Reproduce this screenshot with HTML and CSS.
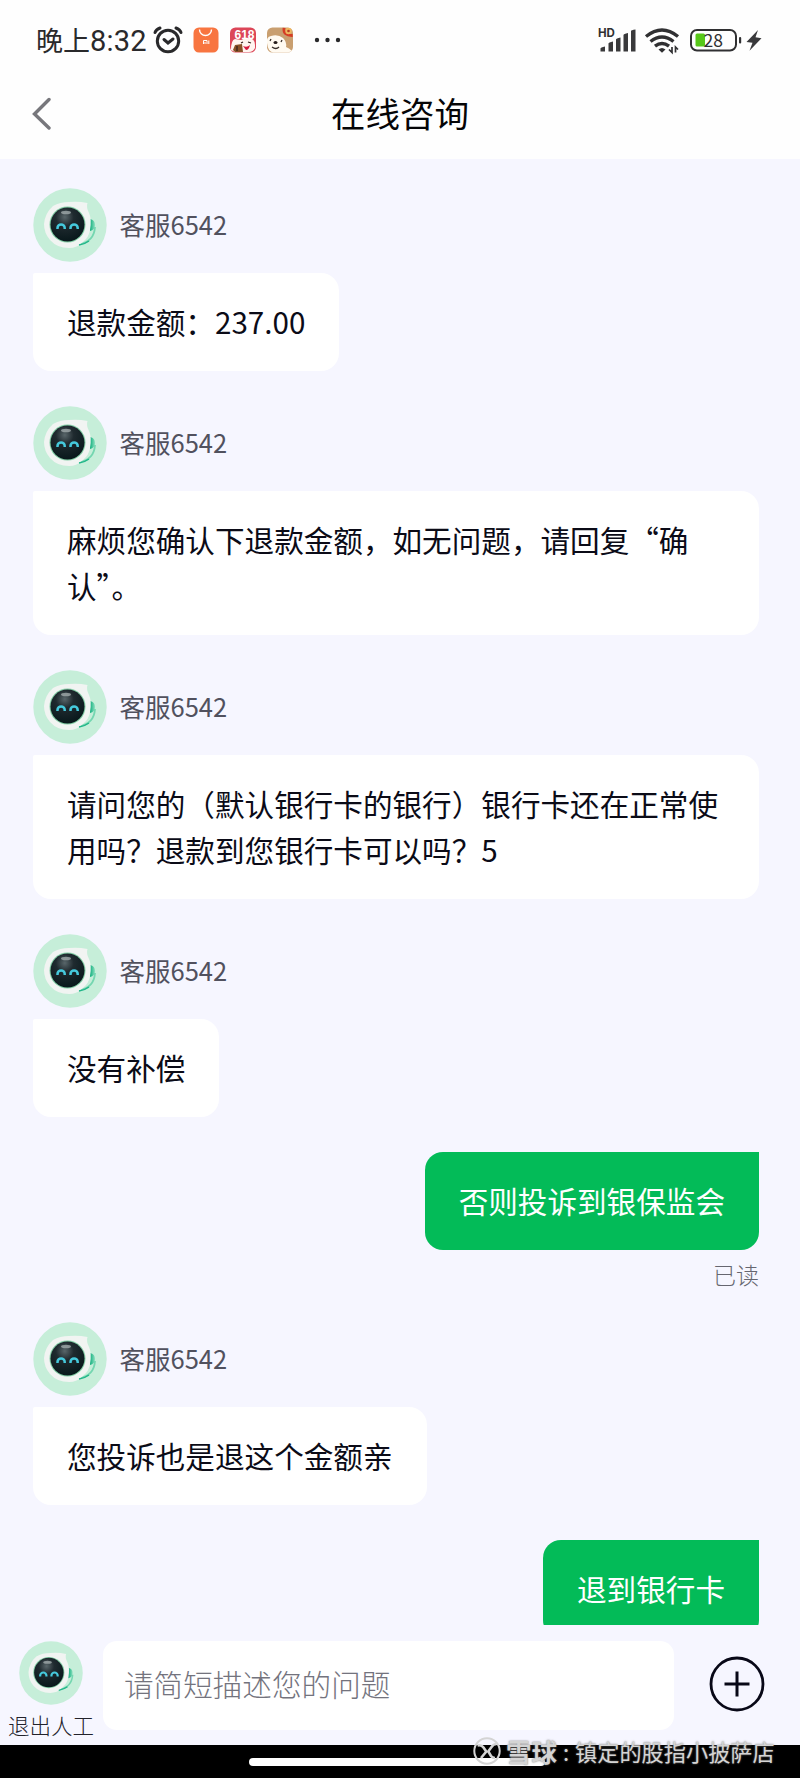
FILE: index.html
```html
<!DOCTYPE html>
<html lang="zh-CN">
<head>
<meta charset="utf-8">
<title>在线咨询</title>
<link rel="stylesheet" href="styles.css">
</head>
<body>
<svg class="defs" aria-hidden="true">
  <defs>
    <radialGradient id="face" cx="42%" cy="28%" r="75%">
      <stop offset="0" stop-color="#59666a"/><stop offset=".35" stop-color="#1f2a2f"/><stop offset="1" stop-color="#07171a"/>
    </radialGradient>
    <linearGradient id="ear" x1="0" y1="0" x2="1" y2="0">
      <stop offset="0" stop-color="#0fae7c"/><stop offset="1" stop-color="#8ce0bf"/>
    </linearGradient>
    <symbol id="robot" viewBox="0 0 74 74">
      <circle cx="37" cy="37" r="36.7" fill="#c6eed9"/>
      <path d="M57 31q5 1 5 6t-5 6z" fill="url(#ear)"/>
      <path d="M62 39q-1 15-16 17" fill="none" stroke="#74d6b0" stroke-width="1.8"/>
      <path d="M36 14Q45 13 54.500 15Q53 19 56 25Q59 31 57 42Q56 49 50 54Q44 60 36 60Q24 60 17 52Q11 45 11 36Q12 25 20 18Q27 14 36 14Z" fill="#f1f4f2"/>
      <circle cx="34.500" cy="36.500" r="18" fill="#82cda5"/>
      <circle cx="34.500" cy="36.500" r="17" fill="url(#face)"/>
      <ellipse cx="33" cy="24.500" rx="5" ry="1.800" fill="#b9c1c2" opacity=".65"/>
      <path d="M24.500 41v-1a3.600 3.600 0 0 1 7.200 0v1M37.500 41v-1a3.600 3.600 0 0 1 7.200 0v1" fill="none" stroke="#45c9dc" stroke-width="2.500"/>
      <path d="M46 57q6-1 10-4" fill="none" stroke="#22b689" stroke-width="1.500"/>
    </symbol>
  </defs>
</svg>
<div class="screen">
  <header class="top">
    <div class="status">
      <span class="clock">晚上<span class="digits">8:32</span></span>
      <svg class="status-left" width="190" height="34" viewBox="152 23 190 34">
        <g fill="none" stroke="#29292b" stroke-width="3" stroke-linecap="round">
          <circle cx="168" cy="41" r="10.700"/>
          <path d="M164 39.500l4 3.500 5-4M155 32.500q1-3 5-4.500M176 28q4 1.500 5 4.500"/>
        </g>
        <rect x="193.500" y="27.500" width="25" height="25" rx="5.500" fill="#f87540"/>
        <path d="M199.500 29.500a6 6 0 0 0 12 0" fill="none" stroke="#fff" stroke-width="1.400"/>
        <path d="M203.500 44v-3.500h3.500V44M205 42v2M208.800 40.500V44" fill="none" stroke="#fff" stroke-width="1"/>
        <rect x="230" y="27.500" width="26" height="25" rx="5.500" fill="#dc4658"/>
        <path d="M231 50q0-10 4-11l6 1 5-2q9-1 9 7v3q-2 4-6 4h-14z" fill="#fff5f0"/>
        <text x="234.500" y="38.500" class="promo">618</text>
        <path d="M233 50l2-5 7-1 1 8h-8z" fill="#885127"/>
        <path d="M243 46q4 2 7-1-1 5-4 5z" fill="#d51b3d"/>
        <path d="M241 43l2-1M248 42l3 1M237 46v5" stroke="#36221c" stroke-width="1.300"/>
        <rect x="267" y="27.500" width="26" height="25" rx="5.500" fill="#c99f70"/>
        <path d="M267 43q-1-6 4-7 7-2 12 2 4 4 3 9 3 1 6 4l-4 1.500h-15q-5-1-6-9.500z" fill="#fffaf1"/>
        <path d="M284 27.800q-1 8 8.700 7.700" fill="none" stroke="#d53c24" stroke-width="2.800"/>
        <circle cx="288.500" cy="31" r="3.200" fill="#efb65e"/><circle cx="288.500" cy="31" r="1.300" fill="#b93c22"/>
        <path d="M270 41l1-2M281 42l1-2M272 47q4 3 7 0" fill="none" stroke="#382e29" stroke-width="1.300"/>
        <ellipse cx="275.500" cy="42.500" rx="2" ry="1.500" fill="#241b19"/>
        <g fill="#29292b"><circle cx="317" cy="40" r="2.200"/><circle cx="327.500" cy="40" r="2.200"/><circle cx="338" cy="40" r="2.200"/></g>
      </svg>
      <svg class="status-right" width="166" height="34" viewBox="597 23 166 34">
        <text x="598" y="37" class="hd">HD</text>
        <path d="M600.500 51.500V48.500q0-1 4.500-2v5zM608.500 51.500V43.500q0-1 4.500-2v10zM616 51.500V39.500q0-1 4.500-2v14zM623.500 51.500V35q0-1 4.500-2v18.500zM631 51.500V31q0-1 4.500-1.500v22z" fill="#39393b"/>
        <g fill="none" stroke="#303032" stroke-width="3.400">
          <path d="M646 36.500q16-13 32 0M650.500 41.500q11.500-9 23 0M655 46.200q7-5.500 14 0"/>
        </g>
        <path d="M658.500 49.500q3.500-3 7 0l-3.500 3.300z" fill="#303032"/>
        <path d="M672 47v5.500l-3-3M675.500 52.500V47l2.500 2.500" fill="none" stroke="#303032" stroke-width="1.700"/>
        <rect x="691" y="30" width="45" height="20.500" rx="6" fill="none" stroke="#303032" stroke-width="2"/>
        <rect x="695.500" y="33.500" width="9.500" height="13" rx="1.500" fill="#57c719"/>
        <text x="703.500" y="46.500" class="charge">28</text>
        <rect x="739" y="37" width="2.200" height="6.500" rx="1" fill="#303032"/>
        <path d="M758 30l-11.500 12 6 .8-3 8 12-12.500-6-1z" fill="#39393b"/>
      </svg>
    </div>
    <div class="nav">
      <svg class="back" width="19" height="34" viewBox="0 0 19 34"><path d="M17 2.500L2.500 17 17 31" fill="none" stroke="#77777c" stroke-width="3.400" stroke-linecap="round"/></svg>
      <h1 class="title">在线咨询</h1>
    </div>
  </header>

  <main class="chat">
    <section class="msg">
      <div class="who"><svg class="avatar"><use href="#robot"/></svg><span>客服6542</span></div>
      <p class="bubble">退款金额：237.00</p>
    </section>
    <section class="msg">
      <div class="who"><svg class="avatar"><use href="#robot"/></svg><span>客服6542</span></div>
      <p class="bubble wide">麻烦您确认下退款金额，如无问题，请回复“确<br>认”。</p>
    </section>
    <section class="msg">
      <div class="who"><svg class="avatar"><use href="#robot"/></svg><span>客服6542</span></div>
      <p class="bubble wide">请问您的（默认银行卡的银行）银行卡还在正常使<br>用吗？退款到您银行卡可以吗？5</p>
    </section>
    <section class="msg">
      <div class="who"><svg class="avatar"><use href="#robot"/></svg><span>客服6542</span></div>
      <p class="bubble">没有补偿</p>
    </section>
    <section class="msg mine">
      <p class="bubble">否则投诉到银保监会</p>
      <span class="read">已读</span>
    </section>
    <section class="msg">
      <div class="who"><svg class="avatar"><use href="#robot"/></svg><span>客服6542</span></div>
      <p class="bubble">您投诉也是退这个金额亲</p>
    </section>
    <section class="msg mine">
      <p class="bubble">退到银行卡</p>
    </section>
  </main>

  <footer class="composer">
    <div class="exit"><svg class="avatar small"><use href="#robot"/></svg><span>退出人工</span></div>
    <div class="field">请简短描述您的问题</div>
    <svg class="plus" width="56" height="56" viewBox="0 0 56 56"><circle cx="28" cy="28" r="26" fill="none" stroke="#080817" stroke-width="2.800"/><path d="M15.500 28h25M28 15.500v25" stroke="#080817" stroke-width="3"/></svg>
  </footer>
  <div class="gesture"><span class="pill"></span></div>
  <div class="credit">
    <svg width="30" height="30" viewBox="0 0 30 30"><g fill="none" stroke="#d4d4d4"><circle cx="15" cy="15" r="12.700" stroke-width="2"/><path d="M5.500 9.500q4-1 6 2l2 3q1 1 0 2l-4.500 5.500M24.500 8q-3 0-5 3l-2.500 3.500q-1 1 0 2l2 3.500q1.500 2 4 2" stroke-width="2.600"/></g></svg>
    <span class="brand">雪球</span><span class="colon">:</span><span>镇定的股指小披萨店</span>
  </div>
</div>
</body>
</html>
```
FILE: styles.css
```css
* { box-sizing: border-box; }
body {
  margin: 0;
  background: #f6f6ff;
  font-family: "Noto Sans CJK SC", sans-serif;
  color: #0b0b17;
}
.defs { position: absolute; width: 0; height: 0; }
.screen {
  position: relative;
  display: flex;
  flex-direction: column;
  width: 800px;
  height: 1778px;
  overflow: hidden;
}
.top {
  flex: none;
  height: 159px;
  background: #fefefe;
}
.status {
  display: flex;
  align-items: center;
  height: 80px;
  padding: 0 37px 0 36px;
}
.clock {
  width: 116px;
  font-size: 27px;
  line-height: 34px;
  color: #29292b;
  white-space: nowrap;
}
.digits {
  font-family: Roboto, sans-serif;
  font-size: 29px;
  letter-spacing: .2px;
}
.status-right { margin-left: auto; }
.promo { font: 700 12px "Liberation Sans", sans-serif; fill: #fff; }
.hd { font: 700 11.500px Inter, sans-serif; fill: #303032; }
.charge { font: 400 17.500px "Noto Sans CJK SC", sans-serif; fill: #303032; }
.nav {
  display: grid;
  grid-template-columns: 19px 1fr 19px;
  align-items: center;
  height: 68px;
  padding: 0 32px;
}
.title {
  margin: -4px 0 0;
  text-align: center;
  font-size: 34.500px;
  line-height: 50px;
  font-weight: 400;
  color: #050507;
}
.chat {
  flex: none;
  display: flex;
  flex-direction: column;
  gap: 34.500px;
  height: 1465.500px;
  padding: 28.800px 41px 0 33px;
  overflow: hidden;
}
.msg {
  flex: none;
  display: flex;
  flex-direction: column;
  align-items: flex-start;
}
.who {
  display: flex;
  align-items: center;
  gap: 12.500px;
  margin-bottom: 11.500px;
  font-size: 25.500px;
  line-height: 36px;
  color: #51515e;
}
.who span { margin-top: -1px; }
.avatar { width: 74px; height: 74px; }
.bubble {
  margin: 0;
  padding: 26px 34px;
  border-radius: 2px 18px 18px 18px;
  background: #fff;
  font-size: 29.600px;
  line-height: 46px;
  white-space: nowrap;
}
.wide { width: 100%; }
.mine { align-items: flex-end; }
.mine .bubble {
  border-radius: 18px 0 18px 18px;
  background: #03bb58;
  color: #fff;
}
.read {
  margin: 8px 0 -2.500px;
  font-size: 23px;
  font-weight: 300;
  line-height: 32px;
  color: #666670;
}
.composer {
  flex: none;
  display: flex;
  height: 120.500px;
}
.exit {
  display: flex;
  flex-direction: column;
  align-items: center;
  width: 103px;
  padding: 16px 1px 0 0;
  font-size: 21.500px;
  font-weight: 300;
  line-height: 30px;
  color: #22222b;
  white-space: nowrap;
}
.small { width: 64px; height: 64px; margin-bottom: 5px; }
.field {
  width: 571px;
  height: 89px;
  margin-top: 16px;
  padding-left: 21px;
  border-radius: 14px;
  background: #fff;
  font-size: 29.600px;
  font-weight: 300;
  line-height: 85px;
  color: #73737d;
}
.plus { margin: 31px 0 0 35px; }
.gesture {
  flex: 1;
  padding-top: 13px;
  background: #000;
}
.pill {
  display: block;
  width: 296px;
  height: 8px;
  margin-left: 249px;
  border-radius: 4px;
  background: #fff;
}
.credit {
  position: absolute;
  left: 472px;
  top: 1736px;
  display: flex;
  align-items: center;
  font-size: 22.200px;
  line-height: 30px;
  color: #d4d4d4;
  text-shadow: 0 0 2px #777;
  white-space: nowrap;
}
.brand { margin-left: 4px; font-size: 25.500px; font-weight: 700; }
.colon { width: 18px; text-align: center; }
```
